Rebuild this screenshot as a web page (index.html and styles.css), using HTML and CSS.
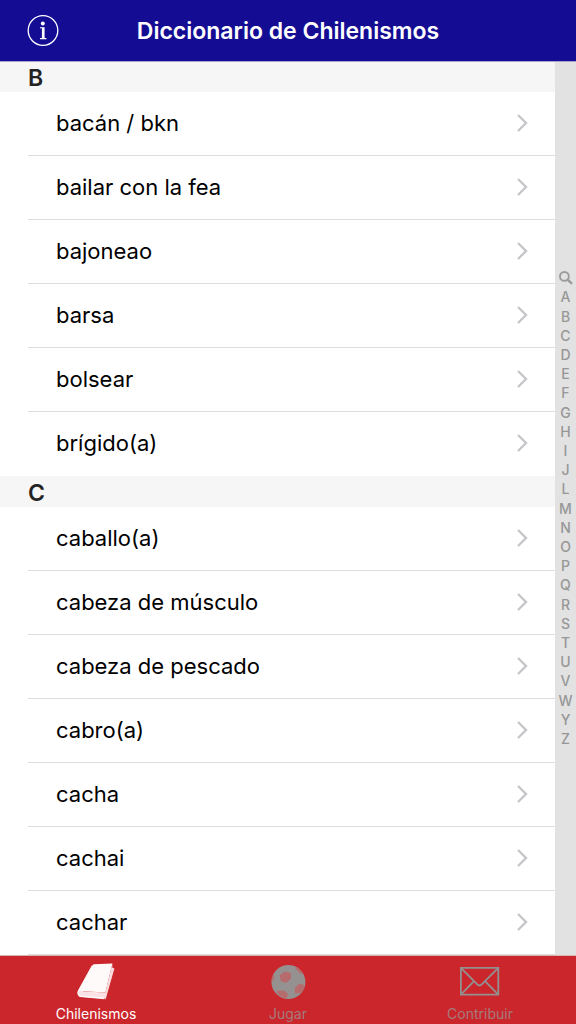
FILE: index.html
```html
<!DOCTYPE html>
<html lang="es">
<head>
<meta charset="utf-8">
<meta name="viewport" content="width=device-width, initial-scale=1">
<title>Diccionario de Chilenismos</title>
<link rel="stylesheet" href="styles.css">
</head>
<body>
<div class="app">
  <header class="navbar">
    <button class="info" aria-label="Información">
      <svg viewBox="0 0 32 32" width="32" height="32" aria-hidden="true">
        <circle cx="16" cy="15.5" r="14.8" fill="none" stroke="#fff" stroke-width="1.3"/>
        <circle cx="15.8" cy="8.4" r="2" fill="#fff"/>
        <path d="M13 12.2h4.6v10.9h1.8v1.1H13v-1.1h1.9v-9.8H13z" fill="#fff"/>
      </svg>
    </button>
    <h1 class="title">Diccionario de Chilenismos</h1>
  </header>

  <div class="content">
    <main class="entries">
      <section>
        <h2 class="letter">B</h2>
        <ul class="words">
          <li><a class="word" href="#">bacán / bkn<svg class="chevron" viewBox="0 0 12 20"><path d="M2 2l8 8-8 8"/></svg></a></li>
          <li><a class="word" href="#">bailar con la fea<svg class="chevron" viewBox="0 0 12 20"><path d="M2 2l8 8-8 8"/></svg></a></li>
          <li><a class="word" href="#">bajoneao<svg class="chevron" viewBox="0 0 12 20"><path d="M2 2l8 8-8 8"/></svg></a></li>
          <li><a class="word" href="#">barsa<svg class="chevron" viewBox="0 0 12 20"><path d="M2 2l8 8-8 8"/></svg></a></li>
          <li><a class="word" href="#">bolsear<svg class="chevron" viewBox="0 0 12 20"><path d="M2 2l8 8-8 8"/></svg></a></li>
          <li><a class="word last" href="#">brígido(a)<svg class="chevron" viewBox="0 0 12 20"><path d="M2 2l8 8-8 8"/></svg></a></li>
        </ul>
      </section>
      <section>
        <h2 class="letter">C</h2>
        <ul class="words">
          <li><a class="word" href="#">caballo(a)<svg class="chevron" viewBox="0 0 12 20"><path d="M2 2l8 8-8 8"/></svg></a></li>
          <li><a class="word" href="#">cabeza de músculo<svg class="chevron" viewBox="0 0 12 20"><path d="M2 2l8 8-8 8"/></svg></a></li>
          <li><a class="word" href="#">cabeza de pescado<svg class="chevron" viewBox="0 0 12 20"><path d="M2 2l8 8-8 8"/></svg></a></li>
          <li><a class="word" href="#">cabro(a)<svg class="chevron" viewBox="0 0 12 20"><path d="M2 2l8 8-8 8"/></svg></a></li>
          <li><a class="word" href="#">cacha<svg class="chevron" viewBox="0 0 12 20"><path d="M2 2l8 8-8 8"/></svg></a></li>
          <li><a class="word" href="#">cachai<svg class="chevron" viewBox="0 0 12 20"><path d="M2 2l8 8-8 8"/></svg></a></li>
          <li><a class="word" href="#">cachar<svg class="chevron" viewBox="0 0 12 20"><path d="M2 2l8 8-8 8"/></svg></a></li>
        </ul>
      </section>
    </main>

    <nav class="index" aria-label="Índice">
      <div class="index-list">
        <a href="#" aria-label="Buscar"><svg viewBox="0 0 14 14" width="14" height="14" fill="none" stroke="#9b9b9b"><circle cx="5.4" cy="5.4" r="4.4" stroke-width="1.9"/><path d="M8.8 8.8l3.5 3.4" stroke-width="2.4" stroke-linecap="round"/></svg></a>
        <a href="#">A</a><a href="#">B</a><a href="#">C</a><a href="#">D</a><a href="#">E</a><a href="#">F</a><a href="#">G</a><a href="#">H</a><a href="#">I</a><a href="#">J</a><a href="#">L</a><a href="#">M</a><a href="#">N</a><a href="#">O</a><a href="#">P</a><a href="#">Q</a><a href="#">R</a><a href="#">S</a><a href="#">T</a><a href="#">U</a><a href="#">V</a><a href="#">W</a><a href="#">Y</a><a href="#">Z</a>
      </div>
    </nav>
  </div>

  <nav class="tabs" aria-label="Secciones">
    <a class="tab active" href="#">
      <svg viewBox="0 0 40 38" width="40" height="38" aria-hidden="true">
        <path d="M16.4 2.4Q17 1.4 18.4 1.3L36.4.6 29.4 29.6 2.2 28z" fill="#fffafa"/>
        <path d="M36.4.6L36.2 4.6l2.2 1L29.6 36.4l-2-2.6 1.8-4.2z" fill="#f9dcde"/>
        <path d="M2.2 28c3-1 5.4.4 8 .6l19.2 1L28.4 36.2 4 34C1.6 33.2 1.2 30 2.2 28z" fill="#fbe3e5"/>
        <path d="M16.2 2.6L2.2 28c-.8 2 0 4.6 1.8 5.2l23.6 2" fill="none" stroke="#fff" stroke-width="1"/>
      </svg>
      <span>Chilenismos</span>
    </a>
    <a class="tab" href="#">
      <svg viewBox="0 0 36 38" width="36" height="38" aria-hidden="true">
        <circle cx="18.4" cy="19" r="17" fill="#959190"/>
        <g fill="#b66b6d">
          <path d="M9.7 12L15 8.4l5.9 1.6.1 5.6-4.7 4.3-5.5-2z"/>
          <path d="M25.6 3.8c3.4 1.4 6.2 4.2 7.6 7.4l-2.6-.6-4.6-4.2z"/>
          <path d="M24.7 25.2l4.2-4.4 4.3.6 1.4 2c-.9 2.6-2 4.5-3.9 6.4l-5.6.8z"/>
          <path d="M6.2 28.4l3.4-1 5.3.5 3 3.2-1.2 4.4C12.6 35 8.6 32.4 6.2 28.4z"/>
          <path d="M1.6 17.4c.3-2 1-4.4 1.9-6.1l.6 2.9-1 3.8z"/>
        </g>
      </svg>
      <span>Jugar</span>
    </a>
    <a class="tab" href="#">
      <svg viewBox="0 0 40 38" width="40" height="38" fill="none" stroke="#949090" stroke-width="1.8" aria-hidden="true">
        <path d="M.9 4.8h37.4v26.8H.9z"/>
        <path d="M.9 4.8L17 21.2q2.5 2.5 5 0L38.3 4.8M.9 31.6L14 18.2M38.3 31.6L25 18.2"/>
      </svg>
      <span>Contribuir</span>
    </a>
  </nav>
</div>
</body>
</html>
```
FILE: styles.css
```css
* {
  box-sizing: border-box;
}

body {
  margin: 0;
  background: #fff;
  color: #000;
  font-family: Inter, "Liberation Sans", sans-serif;
}

a {
  color: inherit;
  text-decoration: none;
}

.app {
  display: flex;
  flex-direction: column;
  min-height: 100vh;
}

.navbar {
  position: relative;
  display: grid;
  grid-template-columns: 32px 1fr 32px;
  align-items: center;
  padding: 15px 27px 14px;
  background: #140d94;
  box-shadow: 0 1px 0 #a6a4c8;
  color: #fff;
}

.info {
  display: flex;
  padding: 0;
  border: 0;
  background: none;
}

.title {
  margin: 0;
  font-size: 23px;
  font-weight: 600;
  line-height: 32px;
  text-align: center;
}

.content {
  display: flex;
  flex: 1;
}

.entries {
  flex: 1;
}

.letter {
  margin: 0;
  padding: 3px 0 0 28px;
  background: #f6f6f6;
  color: #232323;
  font-size: 23px;
  font-weight: 600;
  line-height: 28px;
}

.words {
  margin: 0;
  padding: 0 0 0 28px;
  list-style: none;
}

.word {
  display: flex;
  align-items: center;
  justify-content: space-between;
  height: 64px;
  padding: 0 27px 1px 28px;
  border-bottom: 1px solid #dddde0;
  font-size: 22px;
}

.word.last {
  border-bottom-color: transparent;
}

.chevron {
  width: 12px;
  height: 20px;
  fill: none;
  stroke: #c6c6ca;
  stroke-width: 2.4;
}

.index {
  display: flex;
  align-items: center;
  width: 21px;
  background: #e2e2e2;
  color: #979797;
  font-size: 14px;
  font-weight: 500;
}

.index-list {
  display: flex;
  flex: 1;
  flex-direction: column;
  height: 480px;
}

.index-list a {
  display: flex;
  flex: 1;
  align-items: center;
  justify-content: center;
}

.tabs {
  display: grid;
  grid-template-columns: repeat(3, 1fr);
  border-top: 1px solid #d8b8b4;
  background: #cb262c;
}

.tab {
  display: flex;
  flex-direction: column;
  align-items: center;
  padding-top: 7px;
  color: #a47c7c;
  font-size: 14px;
}

.tab span {
  padding-top: 3px;
  line-height: 20px;
}

.tab.active {
  color: #fff;
}
```
